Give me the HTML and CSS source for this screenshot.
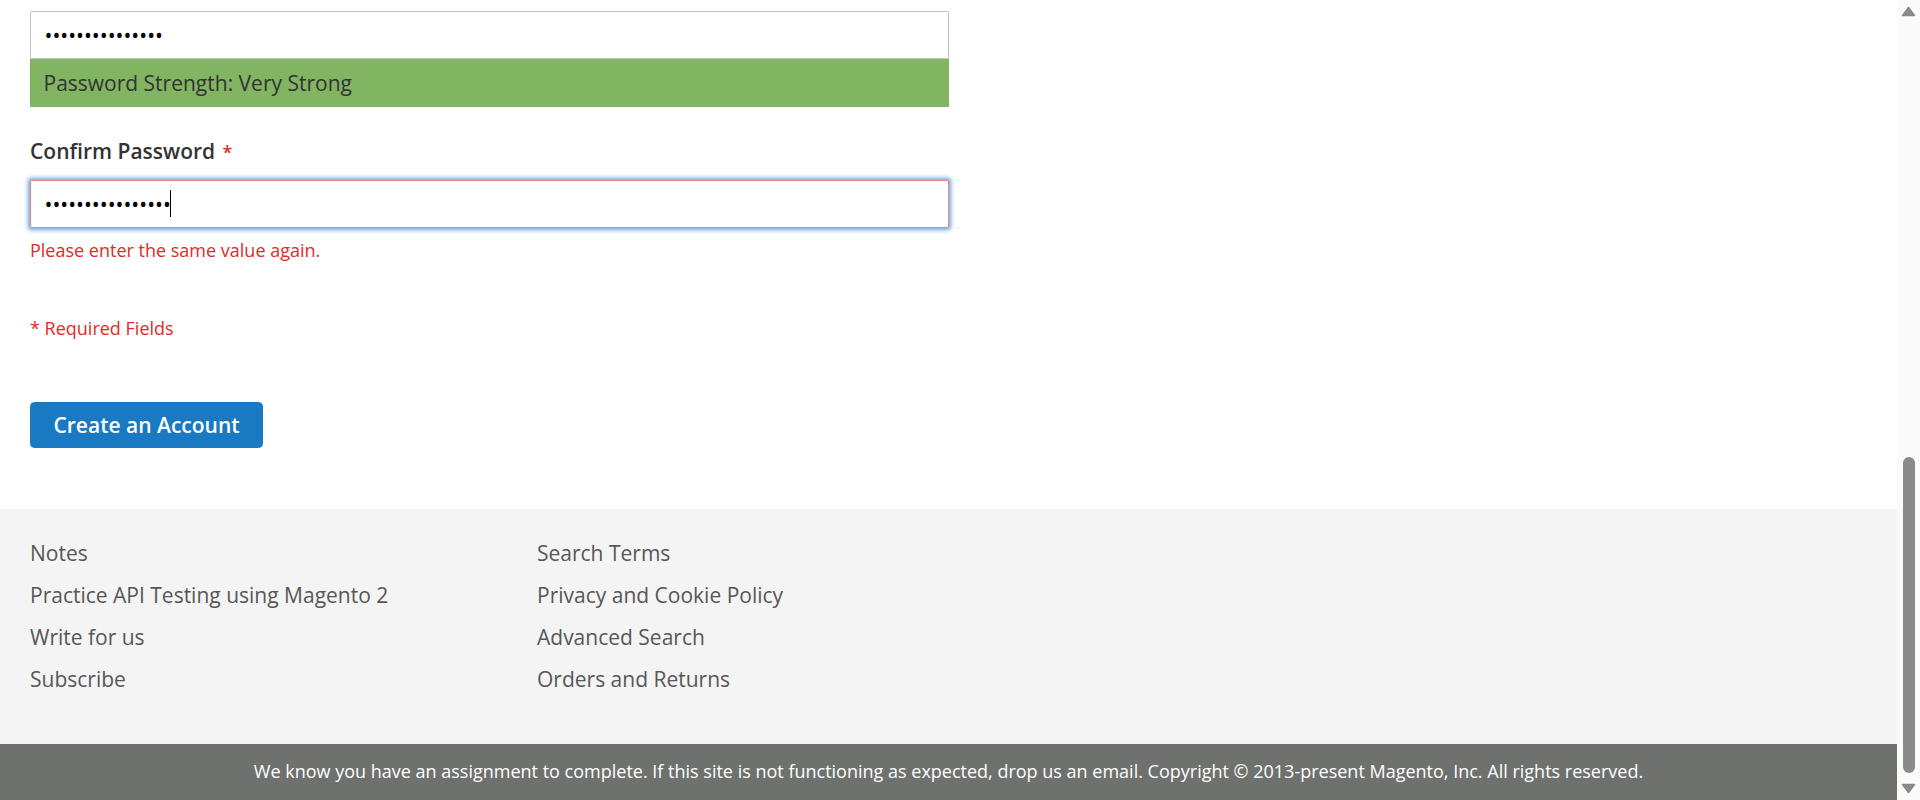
FILE: index.html
```html
<!doctype html>

<html lang="en">
  <head>
    <title>Create New Customer Account</title>
    <meta charset="utf-8" />
    <link rel="stylesheet" href="styles.css">
  </head>

  <body>
    <div class="window">
      <div class="page">

        <main class="page-main">
          <form class="form-create" action="" method="post">

            <div class="field field-password">
              <input type="password" class="input-text" value="Abcdefgh1234567" aria-label="Password">
              <div class="strength-meter">Password Strength: Very Strong</div>
            </div>

            <div class="field field-confirm">
              <label class="label" for="confirm">Confirm Password<span class="req">*</span></label>
              <div class="input-wrap">
                <input type="password" id="confirm" class="input-text input-error" value="Abcdefgh12345678">
                <span class="caret"></span>
              </div>
              <div class="error-msg">Please enter the same value again.</div>
            </div>

            <div class="required-note">* Required Fields</div>

            <div class="actions">
              <button type="button" class="btn-primary">Create an Account</button>
            </div>

          </form>
        </main>

        <footer class="page-footer">
          <div class="footer-links">
            <ul class="links links-first">
              <li><a href="#">Notes</a></li>
              <li><a href="#">Practice API Testing using Magento 2</a></li>
              <li><a href="#">Write for us</a></li>
              <li><a href="#">Subscribe</a></li>
            </ul>
            <ul class="links">
              <li><a href="#">Search Terms</a></li>
              <li><a href="#">Privacy and Cookie Policy</a></li>
              <li><a href="#">Advanced Search</a></li>
              <li><a href="#">Orders and Returns</a></li>
            </ul>
          </div>
          <div class="copyright">We know you have an assignment to complete. If this site is not functioning as expected, drop us an email. Copyright &copy; 2013-present Magento, Inc. All rights reserved.</div>
        </footer>

      </div>

      <!-- page scrollbar, scrolled to the bottom -->
      <div class="scrollbar">
        <div class="sb-arrow">
          <svg width="15" height="11" viewBox="0 0 15 11"><polygon points="7.5,1.5 13.5,9.5 1.5,9.5" fill="#8a8a8a" stroke="#8a8a8a" stroke-width="1.5" stroke-linejoin="round"/></svg>
        </div>
        <div class="sb-track">
          <div class="sb-thumb"></div>
        </div>
        <div class="sb-arrow">
          <svg width="15" height="11" viewBox="0 0 15 11"><polygon points="1.5,1.5 13.5,1.5 7.5,9.5" fill="#8a8a8a" stroke="#8a8a8a" stroke-width="1.5" stroke-linejoin="round"/></svg>
        </div>
      </div>
    </div>
  </body>

</html>
```

FILE: styles.css
```css
*{
  box-sizing: border-box;
}

html, body{
  margin: 0;
  padding: 0;
  height: 100%;
  overflow: hidden;
}

body{
  font-family: "Open Sans", "Helvetica Neue", Arial, sans-serif;
  font-size: 21px;
  line-height: 1.42857;
  color: #333333;
  background-color: #ffffff;
}

.window{
  display: flex;
  height: 800px;
}

.page{
  flex: 1;
  min-width: 0;
  display: flex;
  flex-direction: column;
}

.page-main{
  flex: 1;
  padding: 11px 30px 0;
}

.form-create{
  width: 50%;
}

/* inputs */
.input-text{
  display: block;
  width: 100%;
  height: 48px;
  padding: 0 13.5px;
  border: 1px solid #c2c2c2;
  border-radius: 1px;
  background-color: #ffffff;
  font-family: "Open Sans", "Helvetica Neue", Arial, sans-serif;
  font-size: 21px;
  color: #000000;
  outline: none;
}

.input-error{
  border-color: #ed8380;
  box-shadow: 0 0 4.5px 1.5px #68a8e0;
}

.input-wrap{
  position: relative;
}

/* text cursor of the focused field */
.caret{
  position: absolute;
  left: 140px;
  top: 10px;
  width: 1px;
  height: 27px;
  background-color: #000000;
}

.strength-meter{
  height: 48px;
  line-height: 48px;
  padding: 0 13.5px;
  background-color: #81b562;
  color: #333333;
}

.field-confirm{
  margin-top: 29px;
}

.label{
  display: block;
  font-weight: 600;
  line-height: 30px;
  margin-bottom: 13px;
}

.req{
  color: #e02b27;
  font-size: 18px;
  margin-left: 7.5px;
}

.error-msg{
  margin-top: 10px;
  font-size: 18px;
  line-height: 25.7px;
  color: #e02b27;
}

.required-note{
  margin-top: 52.5px;
  font-size: 18px;
  line-height: 25.7px;
  color: #e02b27;
}

.actions{
  margin-top: 60px;
}

.btn-primary{
  padding: 10px 22.5px;
  border: 1px solid #1979c3;
  border-radius: 4.5px;
  background-color: #1979c3;
  color: #ffffff;
  font-family: "Open Sans", "Helvetica Neue", Arial, sans-serif;
  font-weight: 600;
  font-size: 21px;
  line-height: 24px;
  cursor: pointer;
}

/* footer */
.page-footer{
  background-color: #f4f4f4;
}

.footer-links{
  display: flex;
  padding: 29px 30px 38px;
}

.links{
  list-style: none;
  margin: 0;
  padding: 0;
}

.links-first{
  width: 507px;
}

.links li{
  line-height: 30px;
  margin-bottom: 12px;
}

.links a{
  color: #575757;
  text-decoration: none;
}

.copyright{
  padding: 14px 15px 16px;
  background-color: #6e716e;
  color: #ffffff;
  font-size: 18px;
  line-height: 26px;
  text-align: center;
}

/* scrollbar */
.scrollbar{
  width: 23px;
  display: flex;
  flex-direction: column;
  align-items: center;
  background-color: #fafafa;
}

.sb-arrow{
  height: 23px;
  display: flex;
  align-items: center;
  justify-content: center;
}

.sb-track{
  flex: 1;
  display: flex;
  flex-direction: column;
  justify-content: flex-end;
  padding-bottom: 4px;
}

.sb-thumb{
  width: 12px;
  height: 316px;
  border-radius: 6px;
  background-color: #8a8a8a;
}
```
